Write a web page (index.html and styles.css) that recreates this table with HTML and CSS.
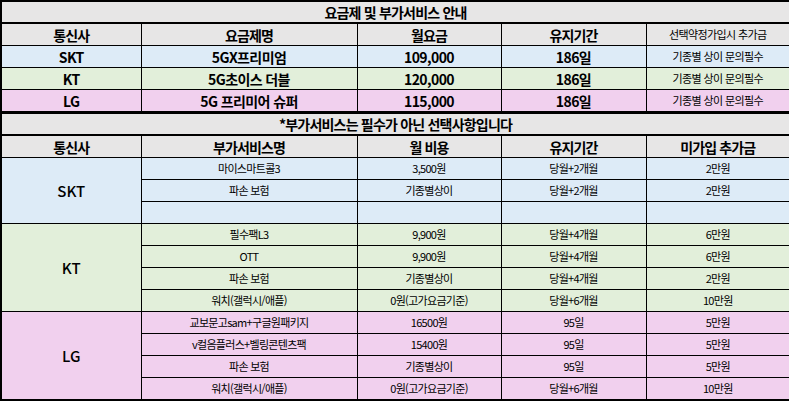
FILE: index.html
```html
<!DOCTYPE html>
<html lang="ko">
<head>
<meta charset="utf-8">
<title>요금제 및 부가서비스 안내</title>
<link rel="stylesheet" href="styles.css">
</head>
<body>
<table class="sheet">
  <colgroup>
    <col class="c1"><col class="c2"><col class="c3"><col class="c4"><col class="c5">
  </colgroup>
  <tbody>
    <tr class="title"><td colspan="5">요금제 및 부가서비스 안내</td></tr>
    <tr class="head">
      <td>통신사</td><td>요금제명</td><td>월요금</td><td>유지기간</td><td class="small">선택약정가입시 추가금</td>
    </tr>
    <tr class="plan skt">
      <td>SKT</td><td>5GX프리미엄</td><td>109,000</td><td>186일</td><td class="small">기종별 상이 문의필수</td>
    </tr>
    <tr class="plan kt">
      <td>KT</td><td>5G초이스 더블</td><td>120,000</td><td>186일</td><td class="small">기종별 상이 문의필수</td>
    </tr>
    <tr class="plan lg last">
      <td>LG</td><td>5G 프리미어 슈퍼</td><td>115,000</td><td>186일</td><td class="small">기종별 상이 문의필수</td>
    </tr>
    <tr class="title"><td colspan="5">*부가서비스는 필수가 아닌 선택사항입니다</td></tr>
    <tr class="head">
      <td>통신사</td><td>부가서비스명</td><td>월 비용</td><td>유지기간</td><td>미가입 추가금</td>
    </tr>

    <tr class="svc skt">
      <td class="carrier" rowspan="3">SKT</td><td>마이스마트콜3</td><td>3,500원</td><td>당월+2개월</td><td>2만원</td>
    </tr>
    <tr class="svc skt"><td>파손 보험</td><td>기종별상이</td><td>당월+2개월</td><td>2만원</td></tr>
    <tr class="svc skt"><td></td><td></td><td></td><td></td></tr>

    <tr class="svc kt">
      <td class="carrier" rowspan="4">KT</td><td>필수팩L3</td><td>9,900원</td><td>당월+4개월</td><td>6만원</td>
    </tr>
    <tr class="svc kt"><td>OTT</td><td>9,900원</td><td>당월+4개월</td><td>6만원</td></tr>
    <tr class="svc kt"><td>파손 보험</td><td>기종별상이</td><td>당월+4개월</td><td>2만원</td></tr>
    <tr class="svc kt"><td>워치(갤럭시/애플)</td><td>0원(고가요금기준)</td><td>당월+6개월</td><td>10만원</td></tr>

    <tr class="svc lg">
      <td class="carrier" rowspan="4">LG</td><td>교보문고sam+구글원패키지</td><td>16500원</td><td>95일</td><td>5만원</td>
    </tr>
    <tr class="svc lg"><td>v컬음플러스+벨링콘텐츠팩</td><td>15400원</td><td>95일</td><td>5만원</td></tr>
    <tr class="svc lg"><td>파손 보험</td><td>기종별상이</td><td>95일</td><td>5만원</td></tr>
    <tr class="svc lg"><td>워치(갤럭시/애플)</td><td>0원(고가요금기준)</td><td>당월+6개월</td><td>10만원</td></tr>
  </tbody>
</table>
</body>
</html>
```

FILE: styles.css
```css
html, body {
  margin: 0;
  padding: 0;
  background: #ffffff;
}

.sheet {
  width: 789px;
  table-layout: fixed;
  border-collapse: collapse;
  border: 2px solid #000;
  font-family: "Noto Sans CJK KR", "Noto Sans", sans-serif;
  color: #000;
}

.c1 { width: 140px; }
.c2 { width: 216px; }
.c3 { width: 144px; }
.c4 { width: 145px; }
.c5 { width: 144px; }

.sheet td {
  border: 1px solid #000;
  padding: 0;
  text-align: center;
  vertical-align: middle;
  white-space: nowrap;
  overflow: hidden;
  line-height: 1;
}

.title td {
  height: 20px;
  background: #e7e6e6;
  font-size: 14px;
  font-weight: 700;
  letter-spacing: -0.8px;
  border-bottom: 2px solid #000;
}

.head td {
  height: 21px;
  background: #e7e6e6;
  font-size: 14px;
  font-weight: 700;
  letter-spacing: -0.9px;
}

.plan td {
  height: 21px;
  font-size: 14px;
  font-weight: 700;
  letter-spacing: -0.6px;
}

.sheet .small {
  font-size: 11px;
  font-weight: 400;
  letter-spacing: -0.6px;
}

.last td {
  border-bottom: 3px solid #000;
}

.svc td {
  height: 21px;
  font-size: 11px;
  font-weight: 400;
  letter-spacing: -0.7px;
}

.svc .carrier {
  font-size: 15px;
  font-weight: 500;
  letter-spacing: 0;
}

.skt td { background: #ddebf7; }
.kt td { background: #e2efda; }
.lg td { background: #f1d0ee; }
```
